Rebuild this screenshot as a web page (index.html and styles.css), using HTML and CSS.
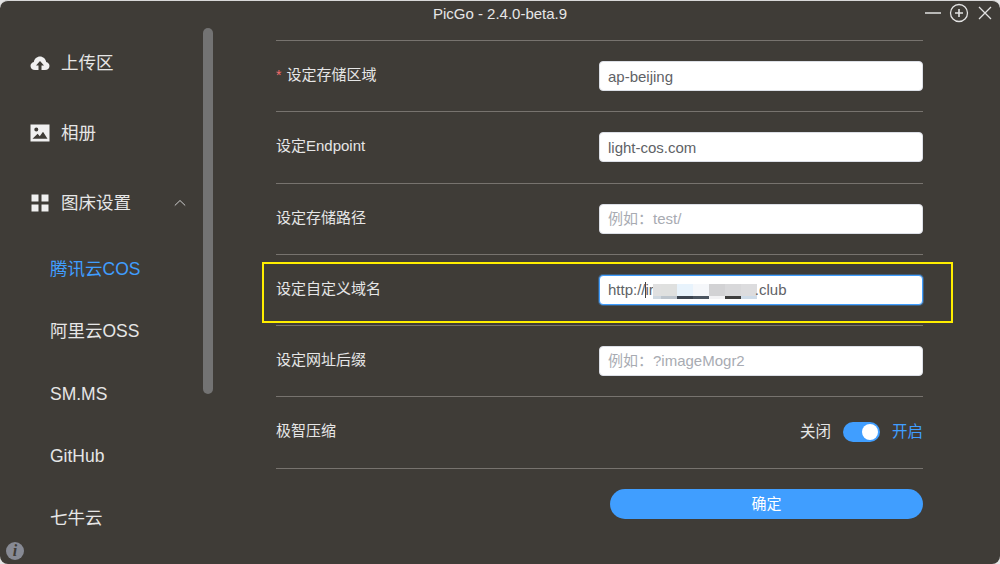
FILE: index.html
```html
<!DOCTYPE html>
<html lang="zh-CN">
<head>
<meta charset="utf-8">
<title>PicGo</title>
<link rel="stylesheet" href="styles.css">
</head>
<body>
<div class="window">
  <header class="titlebar">
    <span class="title">PicGo - 2.4.0-beta.9</span>
    <div class="controls">
      <svg class="ctl" viewBox="0 0 20 20"><path d="M2 10H18"/></svg>
      <svg class="ctl" viewBox="0 0 20 20"><circle cx="10" cy="10" r="8.500"/><path d="M10 6V14M6 10H14" stroke-width="1.600"/></svg>
      <svg class="ctl" viewBox="0 0 20 20"><path d="M4 4L16 16M16 4L4 16"/></svg>
    </div>
  </header>
  <div class="content">
    <aside class="sidebar">
      <nav class="menu">
        <div class="item">
          <svg class="icon" viewBox="0 0 20 20"><path class="fill" d="M5 17C2.400 17 .5 15.200 .5 12.900C.5 10.900 1.900 9.300 3.800 8.900C4.400 5.900 6.900 3.600 10 3.600C13.100 3.600 15.600 5.900 16.200 8.900C18.100 9.300 19.500 10.900 19.500 12.900C19.500 15.200 17.600 17 15 17H11.500V12.500H14L10 8L6 12.500H8.500V17Z"/></svg>
          <span>上传区</span>
        </div>
        <div class="item">
          <svg class="icon" viewBox="0 0 20 20"><path class="fill" fill-rule="evenodd" d="M.5 1.500H19.500V18.500H.5ZM2.500 15.800H17.500L13 8.800L9.800 13.200L7.600 10.800ZM6.300 4.500A2 2 0 1 0 6.301 8.500A2 2 0 1 0 6.300 4.500Z"/></svg>
          <span>相册</span>
        </div>
        <div class="item">
          <svg class="icon" viewBox="0 0 20 20"><path class="fill" d="M1.500 1.500H8.500V8.500H1.500ZM11.500 1.500H18.500V8.500H11.500ZM1.500 11.500H8.500V18.500H1.500ZM11.500 11.500H18.500V18.500H11.500Z"/></svg>
          <span>图床设置</span>
          <svg class="chevron" viewBox="0 0 12 8"><path d="M.8 6.500L6 1.500L11.200 6.500"/></svg>
        </div>
        <div class="sub active">腾讯云COS</div>
        <div class="sub">阿里云OSS</div>
        <div class="sub">SM.MS</div>
        <div class="sub">GitHub</div>
        <div class="sub">七牛云</div>
      </nav>
      <div class="scrollbar"></div>
      <div class="info">i</div>
    </aside>
    <main class="main">
      <div class="row">
        <label class="label"><span class="req">*</span>设定存储区域</label>
        <div class="field"><div class="input">ap-beijing</div></div>
      </div>
      <div class="row">
        <label class="label">设定Endpoint</label>
        <div class="field"><div class="input">light-cos.com</div></div>
      </div>
      <div class="row">
        <label class="label">设定存储路径</label>
        <div class="field"><div class="input placeholder">例如：test/</div></div>
      </div>
      <div class="row">
        <label class="label">设定自定义域名</label>
        <div class="field">
          <div class="input focus">http://<span class="caret"></span>ir<span class="mask"><i class="m1"></i><i class="m2"></i><i class="m3"></i><i class="m4"></i><i class="m5"></i><i class="m6"></i><i class="m7"></i></span>.club</div>
        </div>
        <div class="highlight"></div>
      </div>
      <div class="row">
        <label class="label">设定网址后缀</label>
        <div class="field"><div class="input placeholder">例如：?imageMogr2</div></div>
      </div>
      <div class="row">
        <label class="label raised">极智压缩</label>
        <div class="switch">
          <span>关闭</span>
          <span class="toggle"><span class="knob"></span></span>
          <span class="on">开启</span>
        </div>
      </div>
      <div class="actions"><button class="confirm">确定</button></div>
    </main>
  </div>
</div>
</body>
</html>
```
FILE: styles.css
```css
* { box-sizing: border-box; }
html, body { margin: 0; height: 100%; background: #e4e4e4; overflow: hidden; }
body { font-family: "Liberation Sans", "Noto Sans CJK SC", sans-serif; color: #e6e6e6; line-height: 20px; }
.window {
  height: 564px;
  width: 1000px;
  background: #3f3c37;
  border-radius: 8px;
  display: flex;
  flex-direction: column;
  overflow: hidden;
  border-top: 1px solid #d8d8d8;
}
.titlebar {
  height: 27px;
  flex: none;
  display: flex;
  align-items: center;
  justify-content: center;
  position: relative;
  font-size: 15px;
}
.title { position: relative; top: -1px; }
.controls {
  position: absolute;
  right: 5px;
  top: 2px;
  display: flex;
  gap: 6px;
}
.ctl { width: 20px; height: 20px; fill: none; stroke: #e2e2e2; stroke-width: 1.300; }
.content { flex: 1; display: flex; min-height: 0; }
.sidebar { width: 276px; flex: none; position: relative; }
.item {
  height: 70px;
  display: flex;
  align-items: center;
  padding-left: 30px;
  font-size: 17.500px;
}
.icon { width: 20px; height: 20px; margin-right: 11px; flex: none; }
.fill { fill: #f0f0f0; }
.chevron {
  width: 12px;
  height: 8px;
  margin-left: 43px;
  fill: none;
  stroke: #cfcfcf;
  stroke-width: 1;
}
.sub {
  height: 62.300px;
  display: flex;
  align-items: center;
  padding-left: 50px;
  font-size: 17.500px;
}
.active { color: #409eff; }
.scrollbar {
  position: absolute;
  left: 203px;
  top: 0;
  width: 10px;
  height: 366px;
  border-radius: 5px;
  background: #737373;
}
.info {
  position: absolute;
  left: 6px;
  bottom: 4px;
  width: 18px;
  height: 18px;
  border-radius: 50%;
  background: #878a94;
  color: #3f3c37;
  font: italic bold 16px/18px "Liberation Serif", serif;
  text-align: center;
}
.main { width: 647px; flex: none; padding-top: 12px; }
.row {
  height: 71.300px;
  border-top: 1px solid #77736e;
  display: flex;
  align-items: center;
  justify-content: space-between;
  position: relative;
  font-size: 15px;
}
.label { position: relative; top: -1px; }
.label.raised { top: -2px; }
.req { color: #f56c6c; margin-right: 5px; font-size: 14px; }
.field { width: 324px; }
.input {
  height: 30px;
  background: #fff;
  border: 1px solid #dcdfe6;
  border-radius: 4px;
  padding: 1px 8px 0;
  color: #606266;
  font-size: 15px;
  white-space: nowrap;
  display: flex;
  align-items: center;
}
.placeholder { color: #a8abb2; padding-top: 0; }
.focus { border-color: #409eff; box-shadow: 0 0 0 1px rgba(64, 158, 255, .35); padding-top: 0; }
.caret { width: 1px; height: 16px; background: #444; margin: 0 0 0 -1px; }
.mask { display: flex; height: 15px; margin: 3px -2px 0 -1px; }
.mask i { display: block; width: 16px; height: 15px; }
.mask .m1 { width: 8px; background: linear-gradient(#e0e0e0 80%, #cfd8e0 80%); }
.m2 { background: linear-gradient(#dfe0df 80%, #bcc4cc 80%); }
.m3 { background: linear-gradient(#e8f3fc 80%, #3c4450 80%); }
.m4 { background: linear-gradient(#f5f7fa 80%, #4b5560 80%); }
.m5 { background: linear-gradient(#d2d2d4 80%, #f2f2f4 80%); }
.m6 { background: linear-gradient(#d8d8da 80%, #3e3e3e 80%); }
.m7 { background: linear-gradient(#dcdcde 80%, #cddbe8 80%); }
.highlight {
  position: absolute;
  left: -14px;
  right: -30px;
  top: 7px;
  height: 61px;
  border: 2px solid #ffee00;
  pointer-events: none;
}
.switch { display: flex; align-items: center; gap: 12px; font-size: 15.500px; position: relative; top: -1px; }
.on { color: #409eff; }
.toggle {
  width: 37px;
  height: 20px;
  background: #409eff;
  border-radius: 10px;
  position: relative;
  display: block;
}
.knob {
  position: absolute;
  right: 2px;
  top: 2px;
  width: 16px;
  height: 16px;
  background: #fff;
  border-radius: 50%;
}
.actions { border-top: 1px solid #77736e; display: flex; justify-content: flex-end; padding-top: 20px; }
.confirm {
  width: 313px;
  height: 30px;
  border: 0;
  border-radius: 15px;
  background: #409eff;
  color: #fff;
  font: 15px/20px "Liberation Sans", "Noto Sans CJK SC", sans-serif;
  padding: 0;
}
```
